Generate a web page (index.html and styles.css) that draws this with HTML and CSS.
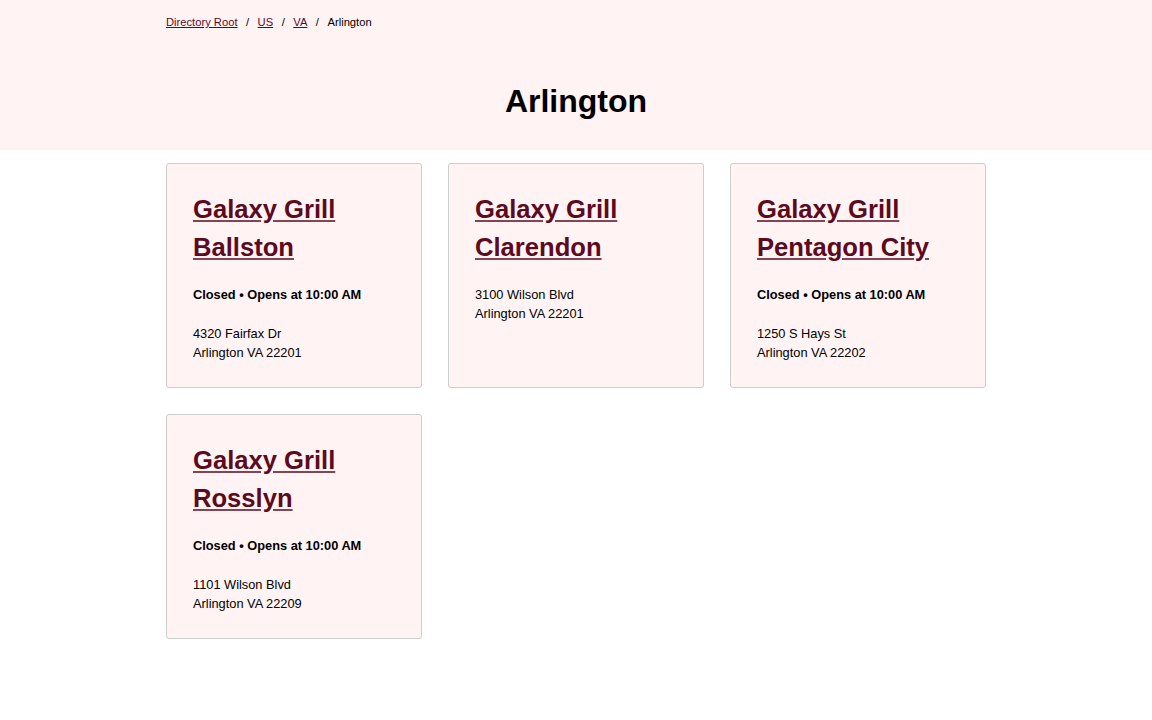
FILE: index.html
```html
<!DOCTYPE html>
<html lang="en">
<head>
<meta charset="utf-8">
<title>Arlington</title>
<link rel="stylesheet" href="styles.css">
</head>
<body>
<header class="hero">
  <div class="container">
    <nav class="crumbs">
      <a href="#">Directory Root</a><span class="sep">/</span><a href="#">US</a><span class="sep">/</span><a href="#">VA</a><span class="sep">/</span><span class="current">Arlington</span>
    </nav>
    <h1 class="title">Arlington</h1>
  </div>
</header>
<main class="container grid">
  <article class="card">
    <h2 class="card-title"><a href="#">Galaxy Grill Ballston</a></h2>
    <p class="hours">Closed • Opens at 10:00 AM</p>
    <p class="addr">4320 Fairfax Dr<br>Arlington VA 22201</p>
  </article>
  <article class="card">
    <h2 class="card-title"><a href="#">Galaxy Grill Clarendon</a></h2>
    <p class="addr">3100 Wilson Blvd<br>Arlington VA 22201</p>
  </article>
  <article class="card">
    <h2 class="card-title"><a href="#">Galaxy Grill Pentagon City</a></h2>
    <p class="hours">Closed • Opens at 10:00 AM</p>
    <p class="addr">1250 S Hays St<br>Arlington VA 22202</p>
  </article>
  <article class="card">
    <h2 class="card-title"><a href="#">Galaxy Grill Rosslyn</a></h2>
    <p class="hours">Closed • Opens at 10:00 AM</p>
    <p class="addr">1101 Wilson Blvd<br>Arlington VA 22209</p>
  </article>
</main>
</body>
</html>
```
FILE: styles.css
```css
* { box-sizing: border-box; }
body {
  margin: 0;
  font-family: "Liberation Sans", Arial, sans-serif;
  color: #000;
  background: #fff;
}
.container {
  width: 820px;
  margin: 0 auto;
}
.hero {
  background: #fff3f4;
  height: 150px;
}
.hero .container {
  padding-top: 15px;
}
.crumbs {
  font-size: 11.2px;
  line-height: 14px;
}
.crumbs a {
  color: #5c0a1e;
}
.sep {
  margin: 0 8.5px;
}
.title {
  margin: 52px 0 0;
  text-align: center;
  font-size: 32px;
  line-height: 40px;
  font-weight: bold;
}
.grid {
  display: grid;
  grid-template-columns: repeat(3, 256px);
  grid-auto-rows: 225px;
  gap: 26px;
  padding-top: 13px;
  padding-bottom: 40px;
}
.card {
  background: #fff3f4;
  border: 1px solid #cdcdcd;
  border-radius: 3px;
  padding: 26px;
}
.card-title {
  margin: 0 0 18.4px;
  font-size: 25.6px;
  line-height: 38.4px;
  font-weight: bold;
}
.card-title a {
  color: #5c0a1e;
  text-decoration-color: rgba(92, 10, 30, 0.75);
}
.hours {
  margin: 0 0 19.4px;
  font-size: 12.8px;
  line-height: 19.2px;
  font-weight: bold;
}
.addr {
  margin: 0;
  font-size: 12.8px;
  line-height: 19.2px;
}
```
